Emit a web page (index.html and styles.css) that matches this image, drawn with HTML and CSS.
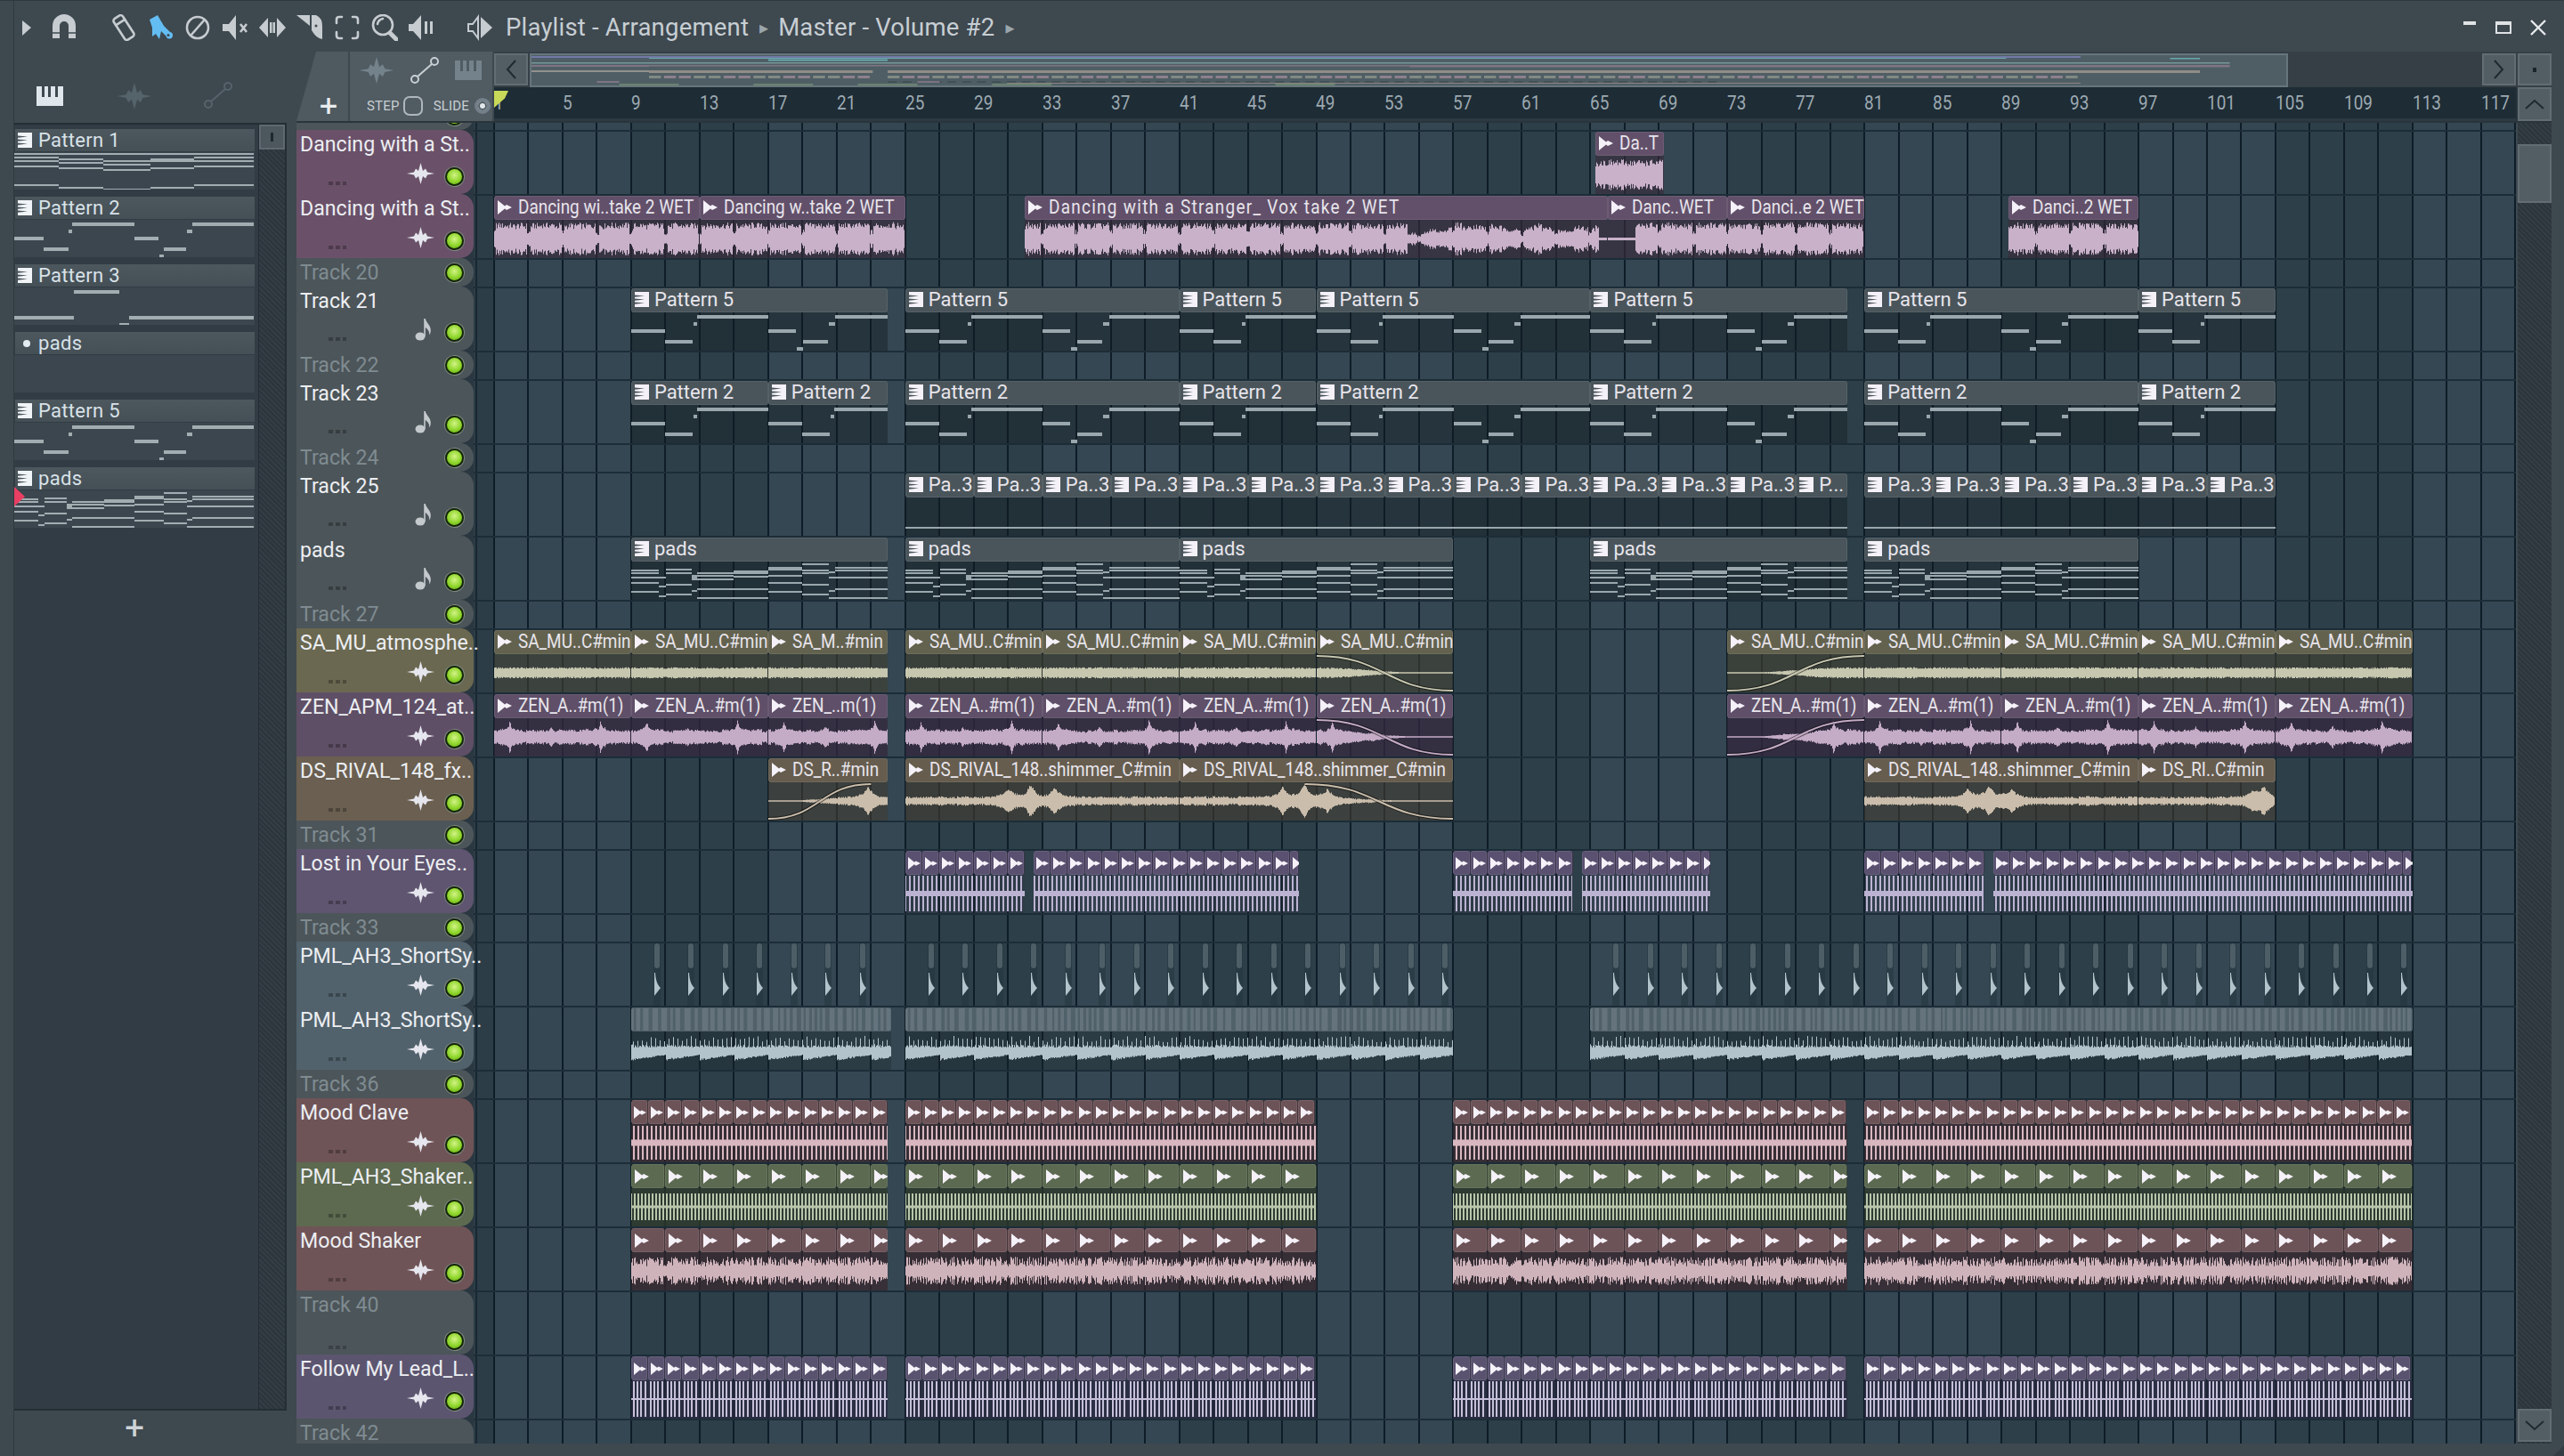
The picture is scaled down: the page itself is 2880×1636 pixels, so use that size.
FILE: index.html
```html
<!DOCTYPE html>
<html lang="en">
<head>
<meta charset="utf-8">
<title>Playlist - Arrangement</title>
<link rel="stylesheet" href="styles.css">
</head>
<body>
<svg class="defs" width="0" height="0">
  <defs>
    <symbol id="ic-clip" viewBox="0 0 16 16"><path d="M0 0L8 6.500 10 5 16 8 10 11 8 9.500 0 16Z"/></symbol>
    <symbol id="ic-pat" viewBox="0 0 16 17"><path fill-rule="evenodd" d="M0 0H16V17H0ZM0 3.600L11 4.600 0 5.800ZM0 7.600L11 8.600 0 9.800ZM0 11.600L11 12.600 0 13.800Z"/></symbol>
    <symbol id="ic-wave" viewBox="0 0 31 24"><path d="M15.500 0L18 9 21 6.500 23 10.500 31 12 23 13.500 21 17.500 18 15 15.500 24 13 15 10 17.500 8 13.500 0 12 8 10.500 10 6.500 13 9Z"/></symbol>
    <symbol id="ic-note" viewBox="0 0 20 26"><ellipse cx="6" cy="21" rx="5.500" ry="4.500"/><path d="M10.200 21V1h1.600c1 5 6 7 6 13 0 2-.5 4-1.500 5.500.3-5-2.500-7-4.500-8.500V21Z"/></symbol>
    <symbol id="ic-piano" viewBox="0 0 30 22"><path fill-rule="evenodd" d="M0 0H30V22H0ZM6 0H9V12H6ZM13 0H16V12H13ZM21 0H24V12H21Z"/></symbol>
  </defs>
</svg>
<div class="app">
  <header class="titlebar">
    <svg class="tool" viewBox="0 0 30 30"><path d="M10 7L20 15 10 24Z"/></svg>
    <svg class="tool t-magnet" viewBox="0 0 30 30"><path d="M2 27V13a13 13 0 0 1 26 0V27H20V13a5 5 0 0 0-10 0V27Z"/><path class="cut" d="M2 21H10M20 21H28"/></svg>
    <svg class="tool t-first line" viewBox="0 0 30 30"><g transform="rotate(-33 15 15)"><rect x="9" y="1" width="12" height="28" rx="3"/><path d="M9 8H21"/></g></svg>
    <svg class="tool blue" viewBox="0 0 30 30"><path d="M3 6L12 1 19 13 26 20a3.800 3.800 0 1 1-4.500 4.500L16 19 14 28 10 22 6 25 6 15Z"/><circle class="cutfill" cx="24" cy="23.500" r="1.500"/></svg>
    <svg class="tool line" viewBox="0 0 30 30"><circle cx="15" cy="15" r="12"/><path d="M8 23L22 7"/></svg>
    <svg class="tool" viewBox="0 0 30 30"><path d="M1 11H8L16 1V29L8 19H1Z"/><path class="stroke" d="M21 11L28 20M28 11L21 20"/></svg>
    <svg class="tool" viewBox="0 0 30 30"><path d="M0 15L10 4V26ZM30 15L20 4V26ZM12 9h2.500V21H12ZM15.500 9H18V21H15.500Z"/></svg>
    <svg class="tool" viewBox="0 0 30 30"><path d="M0 1H15V13ZM17 1H22Q29 4 29 13V28Q22 27 17 18Z"/><circle class="cutfill" cx="22" cy="13" r="1.500"/></svg>
    <svg class="tool line" viewBox="0 0 30 30"><path d="M9 3H6Q3 3 3 6V10M21 3H24Q27 3 27 6V10M9 27H6Q3 27 3 24V20M21 27H24Q27 27 27 24V20"/></svg>
    <svg class="tool line" viewBox="0 0 30 30"><circle cx="13" cy="12" r="11"/><path d="M7 11Q8 6 13 5"/><path class="thick" d="M21 21L29 29"/></svg>
    <svg class="tool" viewBox="0 0 30 30"><path d="M0 11H5L14 1V29L5 19H0ZM18 8H21V22H18ZM24 8H27V22H24Z"/></svg>
    <svg class="tool t-out" viewBox="0 0 30 30"><path class="stroke thin" d="M2 11H7L13 3V27L7 19H2Z"/><path d="M16 3L29 15 16 27Z"/></svg>
    <h1 class="wintitle">Playlist - Arrangement</h1>
    <span class="crumb">&#9656;</span>
    <span class="wintitle">Master - Volume #2</span>
    <span class="crumb">&#9656;</span>
    <div class="winbtns">
      <svg class="w-min" viewBox="0 0 14 4"><rect width="14" height="4"/></svg>
      <svg class="w-max" viewBox="0 0 18 14"><path fill-rule="evenodd" d="M0 0H18V14H0ZM2 4V12H16V4Z"/></svg>
      <svg class="w-x" viewBox="0 0 18 18"><path d="M1 1L17 17M17 1L1 17"/></svg>
    </div>
  </header>

  <main class="main">
    <aside class="left">
      <div class="lefttabs">
        <svg class="lt-piano"><use href="#ic-piano"/></svg>
        <svg class="lt-wave"><use href="#ic-wave"/></svg>
        <svg class="lt-node" viewBox="0 0 32 32"><circle cx="5" cy="26" r="4"/><circle cx="27" cy="6" r="4"/><path d="M8 23L24 9"/></svg>
      </div>
      <div class="picker">
        <div class="plist" id="plist"></div>
        <div class="pscroll"><div class="pbtn"><i></i></div></div>
      </div>
      <div class="pfoot">+</div>
    </aside>

    <section class="right">
      <div class="head">
        <div class="addtab">+</div>
        <div class="tooltab">
          <div class="tt-row">
            <svg class="tt-wave"><use href="#ic-wave"/></svg>
            <svg class="tt-node" viewBox="0 0 32 32"><circle cx="5" cy="26" r="4"/><circle cx="27" cy="6" r="4"/><path d="M8 23L24 9"/></svg>
            <svg class="tt-piano"><use href="#ic-piano"/></svg>
          </div>
          <div class="tt-row tt-low">
            <span>STEP</span><i class="stepbox"></i><span>SLIDE</span><i class="radio"></i>
          </div>
        </div>
        <div class="timeline">
          <div class="overview">
            <div class="btn"><svg viewBox="0 0 12 22"><path d="M11 1L2 11 11 21"/></svg></div>
            <svg class="mini" id="mini" width="1975" height="38"></svg>
            <div class="ovfill"></div>
            <div class="btn"><svg viewBox="0 0 12 22"><path d="M1 1L10 11 1 21"/></svg></div>
            <div class="btn btn-last"><i class="dot"></i></div>
          </div>
          <div class="rulerrow">
            <div class="ruler" id="ruler"></div>
            <div class="btn btn-last btn-up"><svg viewBox="0 0 22 12"><path d="M1 11L11 2 21 11"/></svg></div>
            <div class="playhead"></div>
          </div>
        </div>
      </div>
      <div class="body">
        <div class="tracks" id="tracks"></div>
        <div class="vscroll">
          <div class="thumb"></div>
          <div class="vspace"></div>
          <div class="btn btn-last btn-down"><svg viewBox="0 0 22 12"><path d="M1 1L11 10 21 1"/></svg></div>
        </div>
      </div>
    </section>
  </main>
  <div class="grip"></div>
</div>
<script src="app.js"></script>
</body>
</html>
```

FILE: styles.css
```css
* { box-sizing: border-box; }
html, body { margin: 0; padding: 0; background: #3e484f; }
body { font-family: Roboto, "Liberation Sans", sans-serif; color: #dfe3e6; }
.defs { position: absolute; }

.app {
  position: relative;
  width: 2880px;
  height: 1636px;
  overflow: hidden;
  background: linear-gradient(#2f3940, #2f3940) 15px 0 / 1px 100% no-repeat, #3e484f;
  display: flex;
  flex-direction: column;
  border-top: 1px solid #2f3940;
}

/* title bar */
.titlebar {
  height: 57px;
  flex: none;
  display: flex;
  align-items: flex-start;
  padding: 15px 20px 0 15px;
}
.tool { width: 30px; height: 30px; flex: none; margin-right: 12px; fill: #c6ccd0; }
.tool.t-magnet { margin-right: 37px; }
.tool.t-first { margin-right: 11px; }
.tool.t-out { margin: 0 14px 0 23px; }
.tool.line { fill: none; stroke: #c6ccd0; stroke-width: 2.6; stroke-linecap: round; }
.tool .thick { stroke-width: 5; }
.tool.blue { fill: #63bdf2; }
.tool .cut { stroke: #3e484f; stroke-width: 1.5; fill: none; }
.tool .cutfill { fill: #3e484f; }
.tool .stroke { fill: none; stroke: #c6ccd0; stroke-width: 2.6; }
.tool .stroke.thin { stroke-width: 2; }
.wintitle { margin: 0; font: 400 27.5px/30px Roboto, sans-serif; color: #c7ced3; letter-spacing: .2px; white-space: nowrap; }
.crumb { font: 20px/30px "DejaVu Sans", sans-serif; color: #9aa5ab; margin: 0 11px 0 12px; }
.winbtns { margin-left: auto; display: flex; align-items: flex-start; gap: 21px; }
.w-min { width: 14px; height: 4px; margin-top: 8px; margin-right: 1px; fill: #dfe3e6; }
.w-max { width: 18px; height: 14px; margin-top: 8px; fill: #dfe3e6; }
.w-x { width: 18px; height: 18px; margin-top: 6px; fill: none; stroke: #e6e9eb; stroke-width: 2.4; }

.main { flex: 1; display: flex; min-height: 0; }

/* left: picker */
.left { width: 333px; flex: none; padding-left: 16px; display: flex; flex-direction: column; }
.lefttabs { height: 80px; flex: none; position: relative; display: flex; align-items: flex-start; padding: 39px 0 0 25px; }
.lt-piano { width: 30px; height: 22px; fill: #dfe7ec; }
.lt-wave { width: 40px; height: 30px; margin: -4px 0 0 60px; fill: #55636b; }
.lt-node { width: 32px; height: 32px; margin: -6px 0 0 58px; fill: none; stroke: #55636b; stroke-width: 2; }
.picker {
  width: 306px;
  height: 1447px;
  flex: none;
  display: flex;
  background: #323c44;
  border-top: 2px solid #242e35;
  border-right: 2px solid #242e35;
  border-bottom: 2px solid #242e35;
}
.plist { width: 270px; flex: none; padding-top: 5px; display: flex; flex-direction: column; gap: 8px; }
.pitem { position: relative; height: 68px; flex: none; }
.phead {
  height: 25px;
  margin-left: 1px;
  display: flex;
  align-items: center;
  gap: 7px;
  padding-left: 3px;
  background: linear-gradient(#4d575e, #454f56);
  font-size: 22px;
  color: #d8e2e8;
  letter-spacing: .3px;
}
.phead svg { width: 16px; height: 17px; fill: #f0f4f7; flex: none; }
.phead .bullet { width: 8px; height: 8px; border-radius: 50%; background: #e4ecf1; margin: 0 2px 0 6px; flex: none; }
.pbody { height: 42px; margin-top: 1px; background: #3b464e; display: block; width: 270px; }
.pbody path { fill: #a2adb2; }
.marker {
  position: absolute;
  left: 0;
  top: 22px;
  width: 12px;
  height: 22px;
  background: #e83f62;
  clip-path: polygon(0 0, 100% 50%, 0 100%);
}
.pscroll {
  width: 30px;
  margin-left: 4px;
  flex: none;
  background: repeating-linear-gradient(45deg, #2c353c 0 2px, #333d44 2px 4px);
  border-left: 1px solid #232c33;
}
.pbtn {
  height: 28px;
  background: #4d575e;
  border: 2px solid #5e686e;
  display: flex;
  align-items: center;
  justify-content: center;
}
.pbtn i { width: 3px; height: 10px; background: #1d272e; }
.pfoot { flex: 1; width: 306px; text-align: center; font: 700 30px/38px "DejaVu Sans", sans-serif; color: #cdd3d7; padding-right: 36px; }

/* right */
.right { width: 2533px; flex: none; display: flex; flex-direction: column; }
.head { height: 80px; flex: none; display: flex; border-bottom: 2px solid #2a343b; }
.addtab {
  width: 58px;
  height: 78px;
  background: #4e5960;
  clip-path: polygon(0 100%, 38% 0, 100% 0, 100% 100%);
  font: 700 28px/32px "DejaVu Sans", sans-serif;
  color: #e8ecee;
  text-align: center;
  padding: 45px 0 0 14px;
  flex: none;
}
.tooltab { width: 160px; height: 78px; margin-left: 2px; background: #505b62; flex: none; display: flex; flex-direction: column; }
.tt-row { display: flex; align-items: center; height: 40px; padding: 2px 0 0 10px; }
.tt-wave { width: 40px; height: 30px; fill: #74838b; flex: none; }
.tt-node { width: 32px; height: 32px; margin-left: 18px; fill: none; stroke: #c8cfd3; stroke-width: 2; flex: none; }
.tt-piano { width: 30px; height: 22px; margin-left: 18px; fill: #74838b; flex: none; }
.tt-low { font-size: 15px; color: #c8cfd3; height: 36px; padding: 6px 0 0 19px; letter-spacing: .2px; }
.stepbox { width: 22px; height: 22px; border: 2px solid #aeb7bc; border-radius: 7px; margin: 0 12px 0 4px; }
.radio { width: 18px; height: 18px; border-radius: 50%; border: 4px solid #73808a; background: #e2e7ea; margin-left: 6px; box-shadow: inset 0 0 0 2px #505b62; }
.timeline { margin-left: 2px; width: 2311px; height: 78px; flex: none; display: flex; flex-direction: column; background: #2a343b; }
.overview { height: 40px; display: flex; align-items: flex-start; padding-top: 2px; gap: 2px; background: #363f46; }
.btn {
  width: 38px;
  height: 36px;
  flex: none;
  background: #525d64;
  border: 2px solid #626d73;
  display: flex;
  align-items: center;
  justify-content: center;
}
.btn svg { width: 12px; height: 22px; fill: none; stroke: #1e2930; stroke-width: 2; }
.btn-up svg, .btn-down svg { width: 22px; height: 12px; }
.dot { width: 4px; height: 5px; background: #1a242b; }
.mini { width: 1975px; height: 38px; flex: none; background: #4f5e65; outline: 2px solid #67757b; outline-offset: -2px; }
.mini rect { opacity: .8; }
.ovfill { flex: 1; }
.rulerrow { flex: 1; display: flex; gap: 2px; position: relative; }
.ruler {
  width: 2271px;
  height: 38px;
  flex: none;
  display: flex;
  overflow: hidden;
  background: #1e2c35;
  border-bottom: 3px solid #2b3942;
  font-size: 22px;
  line-height: 35px;
  color: #9ca9b1;
}
.ruler span { width: 76.96px; flex: none; transform: scaleX(.86); transform-origin: 0 50%; }
.btn-up { height: 38px; }
.playhead {
  position: absolute;
  left: 0;
  top: 4px;
  width: 16px;
  height: 19px;
  background: #c8d95a;
  clip-path: polygon(0 0, 100% 0, 75% 45%, 0 100%);
}

.body { height: 1484px; flex: none; display: flex; gap: 2px; }
.tracks {
  width: 2493px;
  height: 1484px;
  overflow: hidden;
  flex: none;
  display: flex;
  flex-direction: column;
  background: #2a3740;
}
.row { display: flex; flex: none; background: #2a3740; }
.row.tall { height: 72px; }
.row.short { height: 32px; }
.row.scrolled { margin-top: -24px; }

.hd {
  width: 199px;
  flex: none;
  background: var(--hd);
  border-radius: 0 15px 15px 0;
  display: flex;
  flex-direction: column;
  padding: 1px 11px 5px 4px;
  position: relative;
}
.nm {
  display: block;
  font-size: 24px;
  line-height: 28px;
  color: #eceef2;
  white-space: nowrap;
  transform: scaleX(.965);
  transform-origin: 0 50%;
}
.row.tall .nm { padding-top: 1px; line-height: 29px; }
.row.dim .nm { color: #7f8b91; }
.hd-bot { margin-top: auto; display: flex; align-items: center; }
.dots { width: 20px; height: 4px; margin: 15px auto 0 32px; background: repeating-linear-gradient(90deg, rgba(0,0,0,.28) 0 5px, transparent 5px 8px); }
.row.dim .dots, .row.plain .dots { background: repeating-linear-gradient(90deg, rgba(0,0,0,.22) 0 5px, transparent 5px 8px); }
.hd-ic { width: 31px; height: 24px; fill: #e6e6ee; margin: 0 12px 6px 0; flex: none; }
.hd-ic.note { width: 20px; height: 26px; fill: #c3c9cc; margin: 0 14px 6px 0; }
.led {
  width: 21px;
  height: 21px;
  border-radius: 50%;
  flex: none;
  background: radial-gradient(circle at 50% 40%, #d2f386, #8fd62c 55%, #58a010);
  border: 2px solid #16260a;
  box-shadow: 0 0 0 1px #7c8a80;
}
.row.short .hd { flex-direction: row; align-items: center; padding-bottom: 0; padding-top: 0; justify-content: space-between; }

.gutter {
  width: 22px;
  flex: none;
  background: linear-gradient(#182732, #182732) 2px 0 / 2px 100% no-repeat, #2c3d47;
  box-shadow: inset 0 2px 0 #1c2d38;
}
.lane {
  flex: 1;
  position: relative;
  background-color: #2c3e48;
  background-image:
    linear-gradient(#1c2d38, #1c2d38),
    repeating-linear-gradient(90deg, #0e1d28 0, #0e1d28 2px, transparent 2px, transparent 38.48px),
    repeating-linear-gradient(90deg, #344752 0, #344752 153.92px, #2d3f49 153.92px, #2d3f49 307.84px);
  background-size: 100% 2px, auto, auto;
  background-repeat: no-repeat, repeat, repeat;
}

/* clips: free canvas */
.clip { position: absolute; top: 2px; bottom: 0; overflow: hidden; }
.ct {
  height: 27px;
  background: var(--ti);
  border-radius: 3px;
  box-shadow: inset 0 0 0 1px rgba(255,255,255,.07);
  display: flex;
  align-items: center;
  white-space: nowrap;
  overflow: hidden;
  font-size: 22px;
  color: #e8e5ec;
  padding: 0 0 2px 4px;
}
.ct span { display: block; flex: none; transform: scaleX(.86); transform-origin: 0 50%; }
.ct.pat span { transform: none; }
.ct.long span { letter-spacing: 1.5px; }
.ct svg { width: 16px; height: 16px; fill: #f5f1f8; flex: none; margin-right: 7px; }
.ct.pat svg { height: 17px; margin-right: 6px; }
.ct.tiles, .ct.bare { background: none; box-shadow: none; padding: 0; }
.ct.bare { background: var(--ti); }
.tile {
  flex: none;
  height: 27px;
  background: var(--ti);
  border-radius: 3px;
  box-shadow: inset 0 0 0 1px rgba(255,255,255,.08);
  border-right: 1px solid rgba(0,0,0,.35);
  display: flex;
  align-items: center;
  padding-left: 3px;
}
.tile svg { margin: 0; width: 14px; height: 14px; }
.tile.wide svg { width: 16px; height: 16px; margin-left: 1px; }
.ct.bare svg.stripes { display: block; width: auto; height: 27px; margin: 0; fill: none; }
.stripes path { fill: rgba(255,255,255,.12); }
.cb { position: absolute; left: 0; right: 0; top: 27px; bottom: 0; background: var(--bd); }
.cb svg { display: block; }
.cb .w { fill: var(--wv); }
.cb .curve { fill: none; stroke: var(--wv); stroke-width: 2; }
.cb .under { fill: none; stroke: rgba(0,0,0,.5); stroke-width: 4; }
.cb .n { fill: #9aa7ad; }
.tick { position: absolute; top: 2px; bottom: 0; width: 8px; background: rgba(30,45,54,.35); }
.tick i { display: block; width: 6px; height: 28px; margin-left: 1px; background: #4e5e67; border-radius: 3px; }
.tick svg { display: block; fill: #b3c3cb; margin-top: 5px; }

/* track colours */
.c-grey  { --hd: #4c5559; --ti: #4a555b; --bd: rgba(18,28,34,.42); --wv: #a2adb3; }
.c-dance { --hd: #6a5169; --ti: #62506a; --bd: rgba(58,42,58,.62); --wv: #c9b1ca; }
.c-sa    { --hd: #6a6850; --ti: #63624f; --bd: rgba(66,64,50,.62); --wv: #c7c7b0; }
.c-zen   { --hd: #5f4f66; --ti: #5f4f68; --bd: rgba(52,40,62,.75); --wv: #c4abc6; }
.c-ds    { --hd: #6a5f50; --ti: #665d4f; --bd: rgba(66,60,50,.62); --wv: #cabdab; }
.c-lost  { --hd: #5f5570; --ti: #5a5070; --bd: rgba(48,44,66,.2); --wv: #bcb3d2; }
.c-pml   { --hd: #51626c; --ti: #50616a; --bd: rgba(24,36,44,.32); --wv: #b2c3cb; }
.c-clave { --hd: #6f5457; --ti: #6c5358; --bd: rgba(58,40,46,.72); --wv: #d9b7c0; }
.c-shake { --hd: #5d6a50; --ti: #5b6a50; --bd: rgba(46,58,42,.72); --wv: #bac6ab; }
.c-mood  { --hd: #6f5457; --ti: #6c5358; --bd: rgba(58,40,46,.72); --wv: #cfb3bb; }
.c-foll  { --hd: #5c5570; --ti: #5a5370; --bd: rgba(42,40,62,.72); --wv: #c6c0da; }

/* scrollbar */
.vscroll {
  width: 38px;
  flex: none;
  display: flex;
  flex-direction: column;
  padding-top: 24px;
  background: repeating-linear-gradient(45deg, #2c353c 0 2px, #333d44 2px 4px);
}
.thumb { height: 66px; flex: none; background: #525d64; border: 2px solid #626d73; }
.vspace { flex: 1; }
.btn-down { height: 37px; margin-bottom: 2px; }

.grip { position: absolute; right: 0; bottom: 0; width: 12px; height: 12px; background: #333c43; clip-path: polygon(100% 0, 100% 100%, 0 100%); }
```

FILE: app.js
```js
const BAR = 19.24, OFF = 1;
const R = n => { const s = Math.sin(n * 12.9898 + 78.233) * 43758.5453; return s - Math.floor(s); };
const P = (x, m, w) => Math.exp(-Math.abs(x - m) / w);
const f1 = v => v.toFixed(1);

/* ---------- pattern note data (fractions of 16 bars, y in px) ---------- */
const line = (a, b, ys, h) => ys.map(y => [a, b, y, h]);
const melody = [
  [0, .123, 19, 4], [.123, .225, 31, 4], [.228, .241, 11, 4], [.241, .5, 3, 4], [.5, .602, 19, 4],
  [.604, .626, 39, 4], [.626, .719, 31, 4], [.72, .744, 11, 4], [.744, 1, 3, 4]
];
const NOTES = {
  p1: [].concat(
    line(0, .185, [1, 5, 9, 15, 36], 1.5), line(.185, .37, [1, 7, 11, 17, 39], 1.5),
    line(.37, .57, [1, 9, 13, 19, 41], 1.5), line(.57, .75, [1, 7, 9, 17, 39], 1.5), line(.75, 1, [1, 5, 9, 15, 36], 1.5)),
  p2: melody,
  p3: [[.25, .44, 3, 4], [0, .25, 32, 4], [.48, 1, 32, 4], [.44, .48, 40, 4]],
  p5: melody,
  pads: [].concat(
    line(0, .1, [9, 12, 23, 33], 1.5), line(0, .125, [17], 1.5), line(.1, .125, [27, 38], 1.5),
    line(.125, .22, [8, 12, 25, 36], 1.5), line(.22, .24, [15, 17, 19, 32], 1.5),
    line(.24, .375, [12, 15, 19, 30, 40], 1.5), line(.375, .5, [10, 12, 16, 30, 40], 1.5),
    line(.5, .625, [6, 8, 15, 23, 33], 1.5), line(.625, .72, [2, 9, 12, 25, 36], 1.5),
    line(.72, .744, [11, 17, 32, 40], 1.5), line(.744, 1, [6, 9, 17, 30, 40], 1.5)),
  p3line: [[0, 1, 33, 2]]
};
function notesPath(list, pxPerRep, width) {
  let d = '';
  for (let rep = 0; rep * pxPerRep < width; rep++) {
    for (const [a, b, y, h] of list) {
      const x1 = a * pxPerRep + rep * pxPerRep;
      const x2 = Math.min(b * pxPerRep + rep * pxPerRep, width);
      if (x1 >= width) continue;
      d += `M${f1(x1)} ${y}H${f1(x2)}V${y + h}H${f1(x1)}Z`;
    }
  }
  return d;
}

/* ---------- waveform shapes: (absolute bar, absolute px) => [up, down] ---------- */
const DSP = [[22.8, 13], [31, 11], [32.3, 15], [33.7, 12], [47, 13], [48.3, 16], [49.6, 12], [87, 11], [88.3, 15], [89.6, 11], [103.6, 8], [104.3, 13]];
const SHAPES = {
  dance(b, x) {
    const p = (b - 1) % 2;
    let a = 10 + R(x) * 7 + R(Math.floor(x / 4)) * 1.5;
    if (p < .1 || p > 1.9) a = 4 + R(x) * 6;
    if (b > 54.3 && b < 56.8) a *= .3 + R(Math.floor(x / 5)) * .6;
    if (b > 57 && b < 65.3) a *= .55 + R(Math.floor(x / 9)) * .5;
    if (b > 65.5 && b < 67.6) a = 1;
    return [a, a + 1];
  },
  dance2(b, x) { const a = 9 + R(x) * 8; return [a, a + 1]; },
  sa(b, x) { const a = 4.5 + R(x) * 1.8; return [a, a]; },
  zen(b, x) {
    const p = (b - 1) % 8;
    const n = R(x) * 2.2 + R(Math.floor(x / 5)) * 2.5;
    const a = 4.5 + n + 10 * P(p, .9, .06) + 3 * P(p, .9, .5) + 11 * P(p, 6.2, .05) + 4 * P(p, 6.2, .5) + 5 * P(p, 3.3, .1);
    return [a * .95, a];
  },
  ds(b, x) {
    let a = 2.5 + R(x) * 2 + R(Math.floor(x / 7)) * 1.2;
    const n = .7 + .3 * R(Math.floor(x / 3));
    for (const [m, h] of DSP) a += h * n * P(b, m, .32);
    return [a, a];
  },
  lost(b, x) { const a = x % 5 < 2 ? 20 : 3; return [a, a]; },
  pml(b, x) {
    const p = ((b - 1) % 2) / 2;
    const k = 1 - p * .7;
    const up = x % 5 === 0 ? 9 + 7 * R(x) : 3 + 4 * k * R(x * 3);
    return [up, 3 + 9 * k * (.7 + .3 * R(x * 5))];
  },
  clave(b, x) { const a = x % 5 < 2 ? 19 : 3.5; return [a, a]; },
  shake(b, x) { const a = x % 4 < 2 ? 15 : 1.5; return [a, a]; },
  mood(b, x) { const a = 5 + R(x) * 11; return [a, a]; },
  foll(b, x) {
    const q = x % BAR;
    const near = [2, 6, 10, 15].some(c => Math.abs(q - c) < 1);
    return near ? [20, 20] : [1, 1];
  }
};

function smooth(t) { t = Math.max(0, Math.min(1, t)); return t * t * (3 - 2 * t); }
function wavePath(kind, a, w, cy, fade) {
  const fn = SHAPES[kind];
  const startPx = Math.round(a * BAR);
  const top = [];
  for (let x = 0; x < w; x++) {
    const b = a + x / BAR;
    let [u, d] = fn(b, x + startPx);
    if (fade) {
      const t = (b - fade.from) / (fade.to - fade.from);
      const m = fade.dir === 'out' ? 1 - smooth(t * 1.25) : smooth((t - .1) * 1.3);
      u = Math.max(u * m, .7);
      d = Math.max(d * m, .7);
    }
    top.push([f1(cy - u), f1(cy + d)]);
  }
  let s = `M0 ${top[0][0]}`;
  top.forEach((v, x) => { s += `V${v[0]}H${x + 1}`; });
  for (let x = top.length - 1; x >= 0; x--) s += `V${top[x][1]}H${x}`;
  return s + 'Z';
}

/* ---------- clip factories ---------- */
const audio = (a, b, t, kind, fade, long) => ({ a, b, t, kind, fade, long, type: 'audio' });
const tiled = (a, b, step, kind) => ({ a, b, step, kind, type: 'tiles' });
const pat = (a, b, t, notes, rep) => ({ a, b, t, notes, rep: rep || 16, type: 'pat' });
const dense = (a, b) => ({ a, b, kind: 'pml', type: 'dense' });

function every(from, to, step, make) {
  const out = [];
  for (let s = from; s < to; s += step) out.push(make(s, Math.min(s + step, to)));
  return out;
}
const section = (list, step, kind) => list.map(([a, b]) => tiled(a, b, step, kind));
const mainBlocks = [[9, 24], [25, 49], [57, 80], [81, 113]];

function saRow(label, third, kind) {
  return [
    audio(1, 9, label, kind), audio(9, 17, label, kind), audio(17, 24, third, kind),
    audio(25, 33, label, kind), audio(33, 41, label, kind), audio(41, 49, label, kind),
    audio(49, 57, label, kind, { dir: 'out', from: 49, to: 57 }),
    audio(73, 81, label, kind, { dir: 'in', from: 73, to: 81 }),
    audio(81, 89, label, kind), audio(89, 97, label, kind), audio(97, 105, label, kind), audio(105, 113, label, kind)
  ];
}

const ticks = [];
for (let b = 10.3; b < 24; b += 2) ticks.push(b);
for (let b = 26.3; b < 56.7; b += 2) ticks.push(b);
for (let b = 66.3; b < 112.7; b += 2) ticks.push(b);

const pa3 = [...every(25, 77, 4, (a, b) => pat(a, b, 'Pa..3', 'p3line', 4)), pat(77, 80, 'P...', 'p3line', 4),
  ...every(81, 105, 4, (a, b) => pat(a, b, 'Pa..3', 'p3line', 4))];

const ROWS = [
  { n: '', s: 1, c: 'c-grey', scrolled: 1 },
  { n: 'Dancing with a St..', c: 'c-dance', ic: 'w', clips: [audio(65.3, 69.3, 'Da..T', 'dance2')] },
  { n: 'Dancing with a St..', c: 'c-dance', ic: 'w', clips: [
    audio(1, 13, 'Dancing wi..take 2 WET', 'dance'), audio(13, 25, 'Dancing w..take 2 WET', 'dance'),
    audio(32, 66, 'Dancing with a Stranger_ Vox take 2 WET', 'dance', null, true),
    audio(66, 73, 'Danc..WET', 'dance'), audio(73, 81, 'Danci..e 2 WET', 'dance'), audio(89.4, 97, 'Danci..2 WET', 'dance')] },
  { n: 'Track 20', s: 1, c: 'c-grey' },
  { n: 'Track 21', c: 'c-grey', ic: 'n', clips: [
    pat(9, 24, 'Pattern 5', 'p5'), pat(25, 41, 'Pattern 5', 'p5'), pat(41, 49, 'Pattern 5', 'p5'), pat(49, 65, 'Pattern 5', 'p5'),
    pat(65, 80, 'Pattern 5', 'p5'), pat(81, 97, 'Pattern 5', 'p5'), pat(97, 105, 'Pattern 5', 'p5')] },
  { n: 'Track 22', s: 1, c: 'c-grey' },
  { n: 'Track 23', c: 'c-grey', ic: 'n', clips: [
    pat(9, 17, 'Pattern 2', 'p2'), pat(17, 24, 'Pattern 2', 'p2'), pat(25, 41, 'Pattern 2', 'p2'), pat(41, 49, 'Pattern 2', 'p2'),
    pat(49, 65, 'Pattern 2', 'p2'), pat(65, 80, 'Pattern 2', 'p2'), pat(81, 97, 'Pattern 2', 'p2'), pat(97, 105, 'Pattern 2', 'p2')] },
  { n: 'Track 24', s: 1, c: 'c-grey' },
  { n: 'Track 25', c: 'c-grey', ic: 'n', clips: pa3 },
  { n: 'pads', c: 'c-grey', ic: 'n', clips: [
    pat(9, 24, 'pads', 'pads'), pat(25, 41, 'pads', 'pads'), pat(41, 57, 'pads', 'pads'), pat(65, 80, 'pads', 'pads'), pat(81, 97, 'pads', 'pads')] },
  { n: 'Track 27', s: 1, c: 'c-grey' },
  { n: 'SA_MU_atmosphe..', c: 'c-sa', ic: 'w', clips: saRow('SA_MU..C#min', 'SA_M..#min', 'sa') },
  { n: 'ZEN_APM_124_at..', c: 'c-zen', ic: 'w', clips: saRow('ZEN_A..#m(1)', 'ZEN_..m(1)', 'zen') },
  { n: 'DS_RIVAL_148_fx..', c: 'c-ds', ic: 'w', clips: [
    audio(17, 24, 'DS_R..#min', 'ds', { dir: 'in', from: 17, to: 23 }),
    audio(25, 41, 'DS_RIVAL_148..shimmer_C#min', 'ds'),
    audio(41, 57, 'DS_RIVAL_148..shimmer_C#min', 'ds', { dir: 'out', from: 48.3, to: 57 }),
    audio(81, 97, 'DS_RIVAL_148..shimmer_C#min', 'ds'), audio(97, 105, 'DS_RI..C#min', 'ds')] },
  { n: 'Track 31', s: 1, c: 'c-grey' },
  { n: 'Lost in Your Eyes..', c: 'c-lost', ic: 'w', clips: section([[25, 32], [32.5, 48], [57, 64], [64.5, 72], [81, 88], [88.5, 113]], 1, 'lost') },
  { n: 'Track 33', s: 1, c: 'c-grey' },
  { n: 'PML_AH3_ShortSy..', c: 'c-pml', ic: 'w', ticks },
  { n: 'PML_AH3_ShortSy..', c: 'c-pml', ic: 'w', clips: [dense(9, 24.2), dense(25, 57), dense(65, 113)] },
  { n: 'Track 36', s: 1, c: 'c-grey' },
  { n: 'Mood Clave', c: 'c-clave', ic: 'w', clips: section(mainBlocks, 1, 'clave') },
  { n: 'PML_AH3_Shaker..', c: 'c-shake', ic: 'w', clips: section(mainBlocks, 2, 'shake') },
  { n: 'Mood Shaker', c: 'c-mood', ic: 'w', clips: section(mainBlocks, 2, 'mood') },
  { n: 'Track 40', c: 'c-grey', plain: 1, dim: 1 },
  { n: 'Follow My Lead_L..', c: 'c-foll', ic: 'w', clips: section(mainBlocks, 1, 'foll') },
  { n: 'Track 42', c: 'c-grey', plain: 1, dim: 1 }
];

/* ---------- rendering ---------- */
const esc = s => s.replace(/&/g, '&amp;');
const use = id => `<svg><use href="#${id}"/></svg>`;

function bodySvg(c, w) {
  const H = 43, cy = 21;
  if (c.type === 'pat') {
    const rep = c.rep === 4 ? w + 1 : 16 * BAR;
    return `<svg width="${f1(w)}" height="${H}" shape-rendering="crispEdges"><path class="n" d="${notesPath(NOTES[c.notes], rep, w)}"/></svg>`;
  }
  let extra = '';
  if (c.fade) {
    const x0 = (c.fade.from - c.a) * BAR, x1 = (c.fade.to - c.a) * BAR, mid = (x0 + x1) / 2;
    const [y0, y1] = c.fade.dir === 'out' ? [2, 41] : [41, 2];
    const d = `M${f1(x0)} ${y0}C${f1(mid)} ${y0} ${f1(mid)} ${y1} ${f1(x1)} ${y1}`;
    extra = `<path class="under" d="${d}"/><path class="curve" d="${d}"/>`;
  }
  return `<svg width="${f1(w)}" height="${H}"><path class="w" d="${wavePath(c.kind, c.a, Math.floor(w), cy, c.fade)}"/>${extra}</svg>`;
}

function stripes(w) {
  let d = '', x = 0, i = 0;
  while (x < w) {
    const wd = 3 + R(i * 7) * 5;
    d += `M${f1(x)} 1h${f1(wd - 1)}v25h-${f1(wd - 1)}Z`;
    x += wd + 1 + R(i * 3) * 3;
    i++;
  }
  return `<svg class="stripes" width="${f1(w)}" height="27"><path d="${d}"/></svg>`;
}

function clipHtml(c) {
  const w = (c.b - c.a) * BAR;
  const left = OFF + (c.a - 1) * BAR;
  let title;
  if (c.type === 'audio') title = `<div class="ct${c.long ? ' long' : ''}">${use('ic-clip')}<span>${esc(c.t)}</span></div>`;
  else if (c.type === 'pat') title = `<div class="ct pat">${use('ic-pat')}<span>${esc(c.t)}</span></div>`;
  else if (c.type === 'dense') title = `<div class="ct bare">${stripes(w)}</div>`;
  else {
    let t = '';
    const tw = c.step * BAR;
    for (let x = 0; x < w - 1; x += tw) {
      const cur = Math.min(tw, w - x);
      t += `<div class="tile${c.step > 1 ? ' wide' : ''}" style="width:${f1(cur)}px">${use('ic-clip')}</div>`;
    }
    title = `<div class="ct tiles">${t}</div>`;
  }
  return `<div class="clip" style="left:${f1(left)}px;width:${f1(w)}px">${title}<div class="cb">${bodySvg(c, w)}</div></div>`;
}

function tickHtml(b) {
  return `<div class="tick" style="left:${f1(OFF + (b - 1) * BAR)}px"><i></i><svg width="8" height="26" viewBox="0 0 8 26"><path d="M1 0L2 0C2.500 8 4 13 8 17L1 26Z"/></svg></div>`;
}

const tracks = document.getElementById('tracks');
let html = '';
for (const r of ROWS) {
  const dim = r.s || r.dim;
  const cls = `row ${r.s ? 'short' : 'tall'} ${r.c}${dim ? ' dim' : ''}${r.plain ? ' plain' : ''}${r.scrolled ? ' scrolled' : ''}`;
  let hd = `<span class="nm">${r.n}</span>`;
  if (r.s) hd += '<i class="led"></i>';
  else {
    const icon = r.ic === 'w' ? '<svg class="hd-ic"><use href="#ic-wave"/></svg>'
      : r.ic === 'n' ? '<svg class="hd-ic note"><use href="#ic-note"/></svg>' : '';
    hd += `<div class="hd-bot"><i class="dots"></i>${icon}<i class="led"></i></div>`;
  }
  const lane = (r.clips || []).map(clipHtml).join('') + (r.ticks || []).map(tickHtml).join('');
  html += `<div class="${cls}"><div class="hd">${hd}</div><div class="gutter"></div><div class="lane">${lane}</div></div>`;
}
tracks.innerHTML = html;

/* picker */
const ITEMS = [['Pattern 1', 'p1'], ['Pattern 2', 'p2'], ['Pattern 3', 'p3'], ['pads', null], ['Pattern 5', 'p5'], ['pads', 'pads']];
document.getElementById('plist').innerHTML = ITEMS.map(([t, n], i) => {
  const icon = n ? '<svg><use href="#ic-pat"/></svg>' : '<i class="bullet"></i>';
  const nd = n ? notesPath(NOTES[n], 269, 269) : '';
  const mark = i === 5 ? '<div class="marker"></div>' : '';
  return `<div class="pitem"><div class="phead">${icon}<span>${t}</span></div><svg class="pbody" height="42" shape-rendering="crispEdges"><path d="${nd}"/></svg>${mark}</div>`;
}).join('');

/* ruler */
let ru = '';
for (let b = 1; b <= 117; b += 4) ru += `<span>${b}</span>`;
document.getElementById('ruler').innerHTML = ru;

/* overview */
const K = 16.75, mx = b => (b - 1) * K;
const rects = [];
const add = (a, b, y, h, c) => rects.push(`<rect x="${f1(mx(a))}" y="${y}" width="${f1(mx(b) - mx(a))}" height="${h}" fill="${c}"/>`);
add(1, 105, 3, 2, '#7c7fb8');
add(9, 100, 5, 1, '#6fbcc2');
add(17, 25, 6.500, 2, '#6fbcc2');
add(111, 113, 5, 1.500, '#6fbcc2');
add(1, 115, 10, 1.500, '#7fa6a8');
add(1, 9, 13, 2, '#8c7a8c');
add(9, 60, 13, 1.500, '#8c7a8c');
add(60, 115, 13, 2.500, '#8c7a8c');
add(1, 9, 19, 2, '#a39f99');
add(9, 24, 19, 3, '#a0988f');
add(25, 113, 19, 3, '#a0988f');
for (let b = 9; b < 24; b += 1) add(b, b + .8, 25, 3, b % 4 < 2 ? '#8d948c' : '#9c8a96');
for (let b = 25; b < 105; b += 1) add(b, b + .8, 25, 3, b % 4 < 2 ? '#8d948c' : '#9c8a96');
for (let b = 25; b < 81; b += 1) add(b, b + .6, 31, 2, '#3f4c53');
add(33, 105, 33, 1, '#9a8f88');
add(5.500, 7, 31, 2, '#8c7a8c'); add(27, 28.500, 31, 2, '#8c7a8c');
add(7, 11, 34, 3, '#6f8c74'); add(16, 20, 34, 3, '#6f8c74'); add(23, 27, 34, 3, '#6f8c74');
add(32, 36, 34, 3, '#6f8c74'); add(51, 55, 34, 3, '#6f8c74');
document.getElementById('mini').innerHTML = rects.join('');
```
